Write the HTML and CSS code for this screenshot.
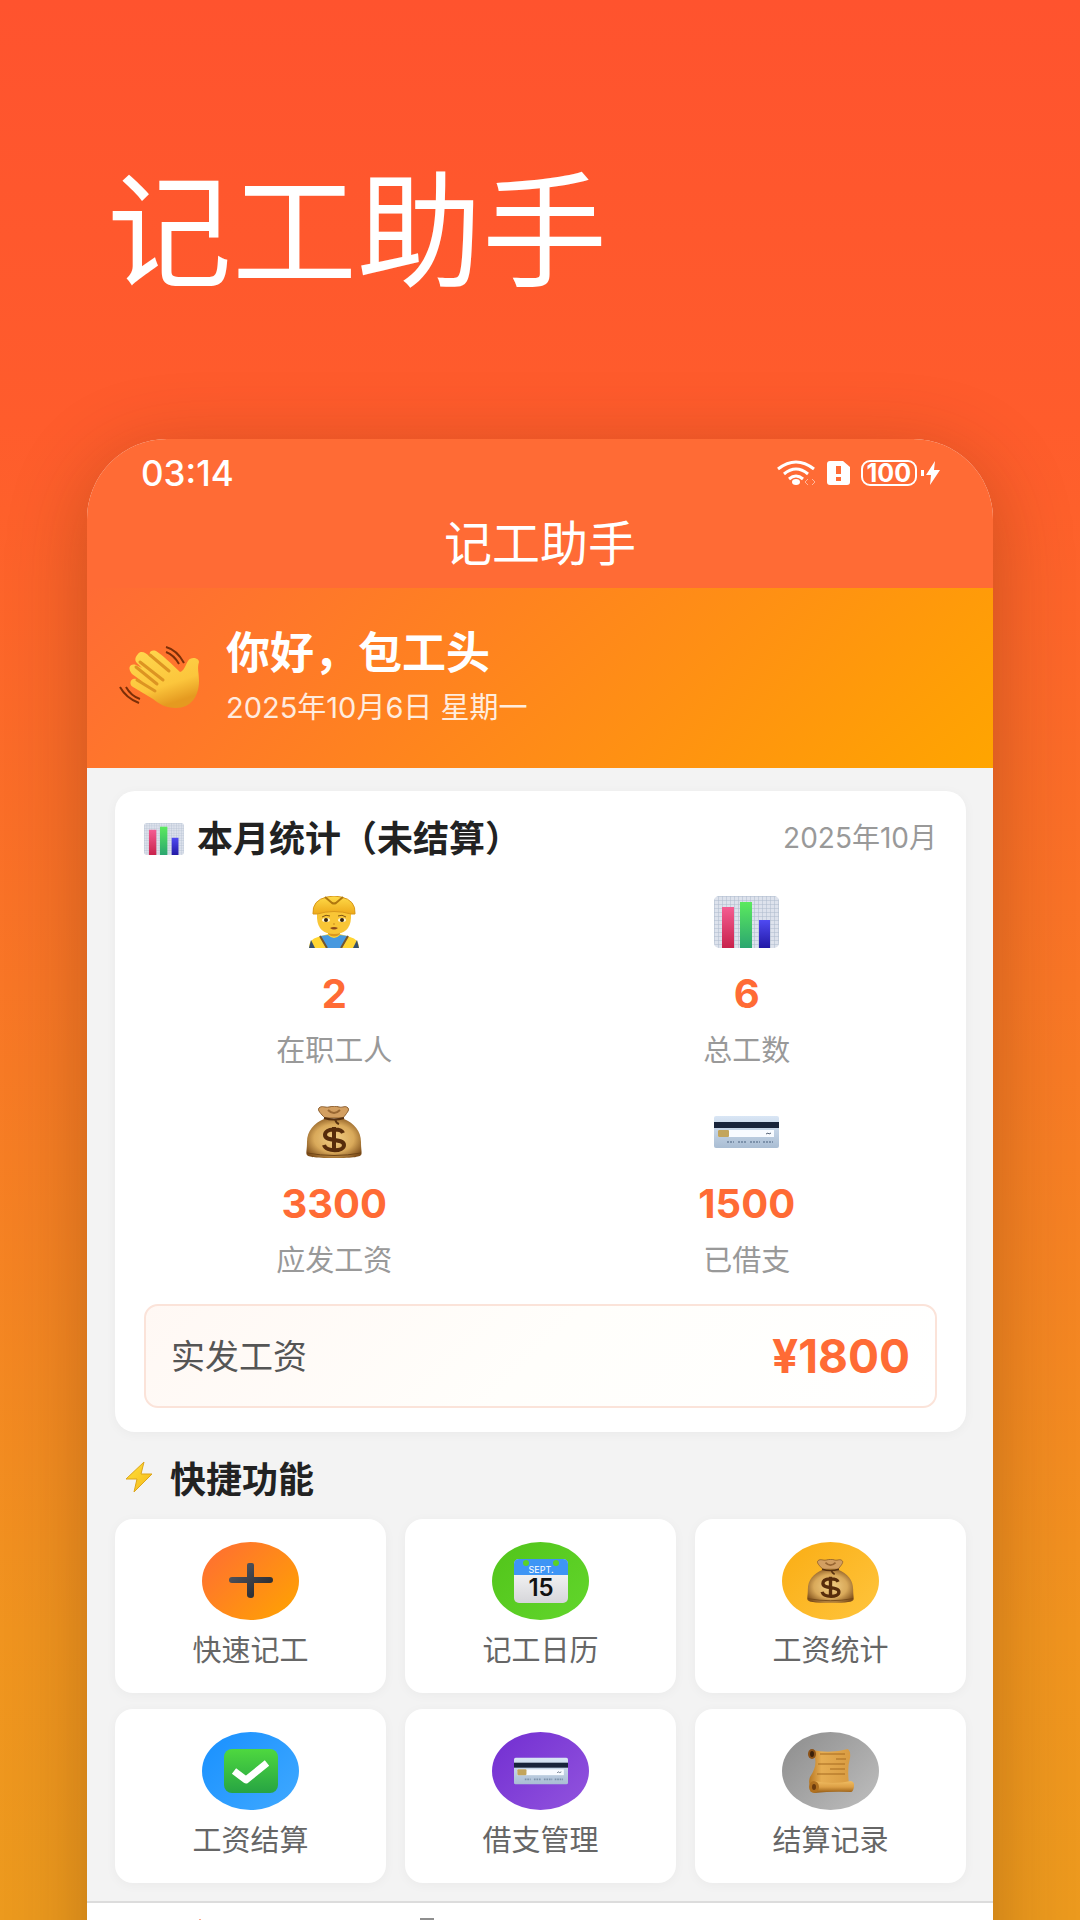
FILE: index.html
```html
<!DOCTYPE html>
<html lang="zh-CN">
<head>
  <meta charset="UTF-8" />
  <meta name="viewport" content="width=device-width, initial-scale=1" />
  <title>记工助手</title>
  <link rel="stylesheet" href="styles.css">
</head>
<body>

  <!-- shared icons -->
  <svg class="defs" width="0" height="0" aria-hidden="true">
    <defs>
      <linearGradient id="gPink" x1="0" y1="0" x2="0" y2="1"><stop offset="0" stop-color="#f45c92"/><stop offset="1" stop-color="#c8224c"/></linearGradient>
      <linearGradient id="gGreen" x1="0" y1="0" x2="0" y2="1"><stop offset="0" stop-color="#5bea5e"/><stop offset="1" stop-color="#2ba670"/></linearGradient>
      <linearGradient id="gBlue" x1="0" y1="0" x2="0" y2="1"><stop offset="0" stop-color="#4f4af2"/><stop offset="1" stop-color="#2219a5"/></linearGradient>
      <linearGradient id="gCard" x1="0" y1="0" x2="0" y2="1"><stop offset="0" stop-color="#d9e6f5"/><stop offset="1" stop-color="#a9bdd3"/></linearGradient>
      <linearGradient id="gHand" x1="0" y1="0" x2="0.4" y2="1"><stop offset="0" stop-color="#ffd84f"/><stop offset="0.7" stop-color="#fcc63c"/><stop offset="1" stop-color="#e59a20"/></linearGradient>
      <radialGradient id="gBag" cx="0.5" cy="0.5" r="0.6"><stop offset="0" stop-color="#f2cf86"/><stop offset="0.6" stop-color="#d9a95a"/><stop offset="1" stop-color="#80501c"/></radialGradient>
      <linearGradient id="gCheck" x1="0" y1="0" x2="0" y2="1"><stop offset="0" stop-color="#4ed83f"/><stop offset="1" stop-color="#27a443"/></linearGradient>
      <linearGradient id="gPlus" x1="0" y1="0" x2="1" y2="1"><stop offset="0" stop-color="#5a5e68"/><stop offset="1" stop-color="#1f2024"/></linearGradient>
      <linearGradient id="gPage" x1="0" y1="0" x2="0" y2="1"><stop offset="0" stop-color="#ffffff"/><stop offset="1" stop-color="#d6d6da"/></linearGradient>
      <linearGradient id="gScroll" x1="0" y1="0" x2="1" y2="0"><stop offset="0" stop-color="#b87823"/><stop offset="0.3" stop-color="#e6ad52"/><stop offset="1" stop-color="#d99c42"/></linearGradient>
      <linearGradient id="gRoll" x1="0" y1="0" x2="0" y2="1"><stop offset="0" stop-color="#f0bd62"/><stop offset="0.5" stop-color="#dc9f45"/><stop offset="1" stop-color="#935912"/></linearGradient>
      <linearGradient id="gHat" x1="0" y1="0" x2="0" y2="1"><stop offset="0" stop-color="#ffdc4a"/><stop offset="1" stop-color="#eda91a"/></linearGradient>
      <linearGradient id="gBolt" x1="0" y1="0" x2="1" y2="1"><stop offset="0" stop-color="#ffe23a"/><stop offset="1" stop-color="#f5b81c"/></linearGradient>
      <pattern id="pGrid" width="4" height="4" patternUnits="userSpaceOnUse"><rect width="4" height="4" fill="#dde2ec"/><path d="M0 0H4M0 0V4" stroke="#aebacd"/></pattern>

      <symbol id="chart" viewBox="0 0 65 52" preserveAspectRatio="none">
        <rect width="65" height="52" rx="5" fill="url(#pGrid)"/>
        <rect x="8" y="11" width="12" height="41" fill="url(#gPink)"/>
        <rect x="26" y="6" width="12" height="46" fill="url(#gGreen)"/>
        <rect x="45" y="24" width="11" height="28" fill="url(#gBlue)"/>
      </symbol>
      <symbol id="bag" viewBox="0 0 56 52">
        <path d="M19 12C15 8 11 4 13 2C16-1 19 2 23 1C27 0 30 0 33 1C37 2 39-1 42 2C44 4 40 8 37 12Z" fill="#d39f61" stroke="#8b5c2b"/>
        <path d="M22 4Q28 10 34 4" fill="none" stroke="#996732" stroke-width="2"/>
        <path d="M18 13C8 17 1 25 1 36C1 43 0 46 .5 48C1 51 8 52 28 52S55 51 55.500 48C56 46 55 43 55 36C55 25 48 17 38 13Z" fill="url(#gBag)"/>
        <path d="M1 47Q28 52 55 47" fill="none" stroke="#6f4517" stroke-width="1"/>
        <path d="M18 12Q28 15 38 12M29 13Q30 17 33 18" fill="none" stroke="#56300f" stroke-width="2"/>
        <path d="M37 27C35 22 19 22 19 29C19 36 38 32 38 39C38 46 20 46 18 39M28 21V46" fill="none" stroke="#572c0b" stroke-width="4"/>
      </symbol>
      <symbol id="card" viewBox="0 0 65 32">
        <rect width="65" height="32" rx="2" fill="url(#gCard)"/>
        <rect y="6" width="65" height="6" fill="#18243a"/>
        <rect x="4" y="14" width="56" height="7" fill="#f8fbff"/>
        <rect x="4" y="14" width="11" height="7" rx="1" fill="#c3a55c"/>
        <path d="M52 18l2-1 1 1 2-1" fill="none" stroke="#566377"/>
        <path d="M13 26h7M24 26h9M36 26h10M49 26h10" stroke="#7d92ab" stroke-width="2" stroke-dasharray="2 1"/>
      </symbol>
    </defs>
  </svg>

  <div class="page">
    <h1 class="page-title">记工助手</h1>

    <div class="phone">
      <div class="status-bar">
        <span class="time">03:14</span>
        <div class="status-icons">
          <svg width="40" height="26" viewBox="0 0 40 26" fill="none" stroke="#fff" stroke-width="3">
            <path d="M1 9Q19-5 37 9"/>
            <path d="M7 14Q19 4 31 14"/>
            <path d="M12 19Q19 13 26 19"/>
            <ellipse cx="19" cy="22" rx="4" ry="3" fill="#fff" stroke="none"/>
            <path d="M31 19l-3 3 3 3M35 19l3 3-3 3" stroke-width="1" opacity=".5"/>
          </svg>
          <svg width="24" height="24" viewBox="0 0 24 24">
            <path d="M3 0H16L23 6V21Q23 24 20 24H3Q0 24 0 21V3Q0 0 3 0Z" fill="#fff"/>
            <path d="M11.500 5v8M11.500 16v4" stroke="#ff6b35" stroke-width="5"/>
          </svg>
          <span class="battery">100</span>
          <svg class="charge" width="20" height="24" viewBox="0 0 20 24" fill="#fff">
            <rect x="0" y="9" width="3" height="6"/>
            <path d="M14 0L5 14H10L9 24L19 9H13Z"/>
          </svg>
        </div>
      </div>
      <h2 class="app-title">记工助手</h2>

      <div class="greeting">
        <svg width="82" height="64" viewBox="0 0 82 64">
          <path d="M19 8C22 4 27 7 30 10L34 12C28 8 31 3 37 5C42 8 54 19 61 26C65 25 66 20 69 15C72 10 80 12 80 16C78 22 80 27 80 35C80 50 72 62 57 62C47 62 40 58 34 53L14 41C9 38 12 31 17 33L24 36L13 28C8 22 11 17 17 19L23 22L19 18C15 15 16 11 19 8Z" fill="url(#gHand)"/>
          <path d="M21 16L44 34M17 21L38 38M18 34L36 45M31 9L50 25" fill="none" stroke="#dd9422" stroke-width="3" stroke-linecap="round"/>
          <path d="M47 1Q58 4 65 17M47 6Q55 9 60 18M1 41Q7 52 20 57M7 41Q12 50 21 53" fill="none" stroke="#7c2f08" stroke-width="2"/>
        </svg>
        <div>
          <p class="hello">你好，包工头</p>
          <p class="today">2025年10月6日 星期一</p>
        </div>
      </div>

      <div class="content">
        <section class="stats">
          <div class="stats-head">
            <svg width="40" height="32"><use href="#chart"/></svg>
            <h3>本月统计（未结算）</h3>
            <span class="month">2025年10月</span>
          </div>
          <div class="stats-grid">
            <div class="stat">
              <svg width="52" height="52" viewBox="0 0 52 52">
                <path d="M1 52Q1 43 10 41L20 38H32L42 41Q51 43 51 52Z" fill="#ffd533"/>
                <path d="M12 40L20 39Q26 45 32 39L40 40L34 52H18Z" fill="#4799df"/>
                <path d="M12 40L19 52M40 40L33 52" stroke="#75542b" stroke-width="2"/>
                <path d="M1 52L3 44L7 52ZM51 52L49 44L45 52Z" fill="#354f6d"/>
                <path d="M20 32H32V38Q26 43 20 38Z" fill="#dc981f"/>
                <path d="M9 15H43V22Q42 38 26 38Q10 38 9 22Z" fill="#f9c636"/>
                <path d="M5 18Q4 4 19 1Q26-1 33 1Q48 4 47 18H43Q26 13 9 18Z" fill="url(#gHat)" stroke="#d9991c"/>
                <path d="M17 1L24 7Q26 8 28 7L35 1" fill="none" stroke="#af770f" stroke-width="2"/>
                <path d="M14 21Q18 18 22 20M30 20Q34 18 38 21" fill="none" stroke="#805515"/>
                <ellipse cx="18" cy="24" rx="4" ry="2" fill="#fff5d0"/><ellipse cx="34" cy="24" rx="4" ry="2" fill="#fff5d0"/>
                <circle cx="18" cy="24" r="2" fill="#35230e"/><circle cx="34" cy="24" r="2" fill="#35230e"/>
                <path d="M25 28H27" stroke="#c98a1c"/>
                <path d="M22 32Q26 30 30 32Q26 35 22 32Z" fill="#8d4a1c"/>
              </svg>
              <strong>2</strong>
              <span>在职工人</span>
            </div>
            <div class="stat">
              <svg width="65" height="52"><use href="#chart"/></svg>
              <strong>6</strong>
              <span>总工数</span>
            </div>
            <div class="stat">
              <svg width="56" height="52"><use href="#bag"/></svg>
              <strong>3300</strong>
              <span>应发工资</span>
            </div>
            <div class="stat">
              <svg width="65" height="52"><use href="#card"/></svg>
              <strong>1500</strong>
              <span>已借支</span>
            </div>
          </div>
          <div class="net">
            <span>实发工资</span>
            <strong>¥1800</strong>
          </div>
        </section>

        <h3 class="section-title">
          <svg width="28" height="32" viewBox="0 0 28 32">
            <path d="M19 1L1 18L12 18L9 31L27 13L16 13Z" fill="url(#gBolt)" stroke="#dda51b"/>
          </svg>
          快捷功能
        </h3>

        <nav class="actions">
          <a class="action" href="#">
            <span class="icon orange">
              <svg width="44" height="36" viewBox="0 0 44 36">
                <path d="M18 2Q18 0 20 0H23Q25 0 25 2V14H41Q44 14 44 17Q44 20 41 20H25V32Q25 35 22 35Q18 35 18 32V20H3Q0 20 0 17Q0 14 3 14H18Z" fill="url(#gPlus)"/>
              </svg>
            </span>
            快速记工
          </a>
          <a class="action" href="#">
            <span class="icon green">
              <svg width="54" height="44" viewBox="0 0 54 44">
                <rect width="54" height="44" rx="5" fill="url(#gPage)"/>
                <path d="M0 16V5Q0 0 5 0H49Q54 0 54 5V16Z" fill="#3e95f5"/>
                <circle cx="12" cy="4" r="3" fill="#5bd125"/><circle cx="42" cy="4" r="3" fill="#5bd125"/>
                <text class="cal-month" x="27" y="14">SEPT.</text>
                <text class="cal-day" x="27" y="37">15</text>
              </svg>
            </span>
            记工日历
          </a>
          <a class="action" href="#">
            <span class="icon yellow"><svg width="47" height="44"><use href="#bag"/></svg></span>
            工资统计
          </a>
          <a class="action" href="#">
            <span class="icon blue">
              <svg width="54" height="44" viewBox="0 0 54 44">
                <rect width="54" height="44" rx="8" fill="url(#gCheck)"/>
                <path d="M10 22L22 31L43 14" fill="none" stroke="#fff" stroke-width="7" stroke-linejoin="round"/>
              </svg>
            </span>
            工资结算
          </a>
          <a class="action" href="#">
            <span class="icon purple"><svg width="54" height="44"><use href="#card"/></svg></span>
            借支管理
          </a>
          <a class="action" href="#">
            <span class="icon gray">
              <svg width="46" height="46" viewBox="0 0 46 46">
                <path d="M4 2Q22 6 40 1Q43 4 42 10Q39 20 41 36L6 42Q-1 38 2 29Q9 19 7 10Z" fill="url(#gScroll)"/>
                <path d="M12 6H37M28 11H38M10 16H37M22 21H37M9 26H37" stroke="#a66b20" stroke-width="1"/>
                <ellipse cx="4" cy="6" rx="4" ry="5" fill="#8c5217"/><ellipse cx="4" cy="6" rx="2" ry="3" fill="#3b200a"/>
                <path d="M6 33Q25 37 43 33Q47 34 46 39Q45 44 43 44Q25 43 6 45Z" fill="url(#gRoll)"/>
                <ellipse cx="6" cy="39" rx="5" ry="6" fill="#b0701f"/><ellipse cx="6" cy="39" rx="2" ry="3" fill="#6b3b0e"/>
              </svg>
            </span>
            结算记录
          </a>
        </nav>
      </div>

      <nav class="tabbar">
        <a href="#"><svg width="48" height="40" viewBox="0 0 48 40"><path d="M24 1L46 20H39V39H9V20H2Z" fill="#ff6b35"/></svg></a>
        <a href="#"><svg width="48" height="40" viewBox="0 0 48 40"><path d="M17 0H31V5H42V40H6V5H17Z" fill="#8f8f8f"/></svg></a>
        <a href="#"><svg width="48" height="40" viewBox="0 0 48 40"><circle cx="38" cy="11" r="9" fill="#8f8f8f"/><ellipse cx="24" cy="38" rx="20" ry="14" fill="#8f8f8f"/></svg></a>
        <a href="#"><svg width="48" height="40" viewBox="0 0 48 40"><circle cx="24" cy="14" r="10" fill="#8f8f8f"/><ellipse cx="24" cy="40" rx="20" ry="13" fill="#8f8f8f"/></svg></a>
      </nav>
    </div>
  </div>

</body>
</html>
```
FILE: styles.css
```css
* {
  box-sizing: border-box;
}
body {
  margin: 0;
  font-family: Inter, "Noto Sans CJK SC", sans-serif;
  color: #222;
}
h1, h2, h3, p {
  margin: 0;
}
a {
  color: inherit;
  text-decoration: none;
}
svg {
  display: block;
  flex-shrink: 0;
}
.defs {
  position: absolute;
}
.page {
  height: 100vh;
  overflow: hidden;
  padding: 140px 87px 0;
  background: linear-gradient(#ff532e 0%, #ff5c2c 22%, #f0941f 85%, #ec9a1e 100%);
}
.page-title {
  padding: 0 20px;
  font-size: 125px;
  font-weight: 400;
  line-height: 184px;
  color: #fff;
}
.phone {
  margin-top: 115px;
  overflow: hidden;
  border-radius: 80px 80px 0 0;
  background: #f3f3f3;
  box-shadow: 0 16px 80px rgba(80, 40, 0, 0.3);
}

/* header */
.status-bar {
  display: flex;
  align-items: center;
  justify-content: space-between;
  height: 68px;
  padding: 0 52px 0 54px;
  background: #ff6b35;
  color: #fff;
}
.time {
  font-size: 35px;
  font-weight: 500;
  line-height: 64px;
}
.status-icons {
  display: flex;
  align-items: center;
  gap: 10px;
}
.battery {
  padding: 0 4px;
  border: 2px solid #fff;
  border-radius: 9px;
  font-size: 25px;
  font-weight: 700;
  line-height: 22px;
}
.charge {
  margin-left: -6px;
}
.app-title {
  height: 81px;
  background: #ff6b35;
  color: #fff;
  font-size: 48px;
  font-weight: 400;
  line-height: 74px;
  text-align: center;
}
.greeting {
  display: flex;
  align-items: center;
  gap: 25px;
  height: 180px;
  padding: 0 32px;
  background: linear-gradient(135deg, #ff6b35, #ffa500);
  color: #fff;
}
.hello {
  font-size: 44px;
  font-weight: 700;
  line-height: 60px;
}
.today {
  font-size: 29px;
  line-height: 50px;
  opacity: 0.85;
}

/* monthly stats */
.content {
  padding: 23px 27px 18px 28px;
}
.stats {
  padding: 24px 29px;
  border-radius: 20px;
  background: #fff;
  box-shadow: 0 2px 12px rgba(0, 0, 0, 0.04);
}
.stats-head {
  display: flex;
  align-items: center;
  gap: 13px;
  height: 48px;
}
.stats-head h3,
.section-title {
  font-size: 36px;
  font-weight: 700;
}
.stats-head h3,
.month {
  padding-bottom: 6px;
}
.month {
  margin-left: auto;
  color: #999;
  font-size: 28px;
}
.stats-grid {
  display: grid;
  grid-template-columns: 1fr 1fr;
  gap: 35px 32px;
  padding: 33px 0 23px;
}
.stat {
  display: flex;
  flex-direction: column;
  align-items: center;
}
.stat strong {
  margin: 16px 0 6px;
  color: #ff6b35;
  font-size: 40px;
  line-height: 60px;
}
.stat span {
  color: #999;
  font-size: 29px;
  line-height: 41px;
}
.net {
  display: flex;
  align-items: center;
  justify-content: space-between;
  height: 104px;
  padding: 0 25px;
  border: 2px solid #fbe3d9;
  border-radius: 14px;
  background: linear-gradient(135deg, #fff8f4, #fffefb 50%, #fff);
}
.net span {
  padding-bottom: 4px;
  color: #555;
  font-size: 34px;
}
.net strong {
  color: #ff6b35;
  font-size: 46px;
}

/* shortcuts */
.section-title {
  display: flex;
  align-items: center;
  gap: 17px;
  height: 87px;
  padding: 2px 10px 0;
}
.actions {
  display: grid;
  grid-template-columns: repeat(3, 1fr);
  gap: 16px 19px;
}
.action {
  display: flex;
  flex-direction: column;
  align-items: center;
  gap: 10px;
  height: 174px;
  padding-top: 23px;
  border-radius: 18px;
  background: #fff;
  box-shadow: 0 2px 12px rgba(0, 0, 0, 0.04);
  color: #666;
  font-size: 29px;
  line-height: 41px;
}
.icon {
  display: flex;
  align-items: center;
  justify-content: center;
  width: 97px;
  height: 78px;
  border-radius: 50%;
}
.orange { background: linear-gradient(135deg, #ff6b35, #ffa500); }
.green { background: linear-gradient(135deg, #52c41a, #62d62c); }
.yellow { background: linear-gradient(135deg, #faad14, #ffc53d); }
.blue { background: linear-gradient(135deg, #1890ff, #40a9ff); }
.purple { background: linear-gradient(135deg, #722ed1, #9254de); }
.gray { background: linear-gradient(135deg, #8c8c8c, #bfbfbf); }
.cal-month {
  fill: #fff;
  font-size: 9px;
  text-anchor: middle;
}
.cal-day {
  fill: #111;
  font-size: 24px;
  font-weight: 600;
  text-anchor: middle;
}

.tabbar {
  display: grid;
  grid-template-columns: repeat(4, 1fr);
  justify-items: center;
  height: 120px;
  padding-top: 15px;
  border-top: 2px solid #dcdcdc;
  background: #fff;
}
```
